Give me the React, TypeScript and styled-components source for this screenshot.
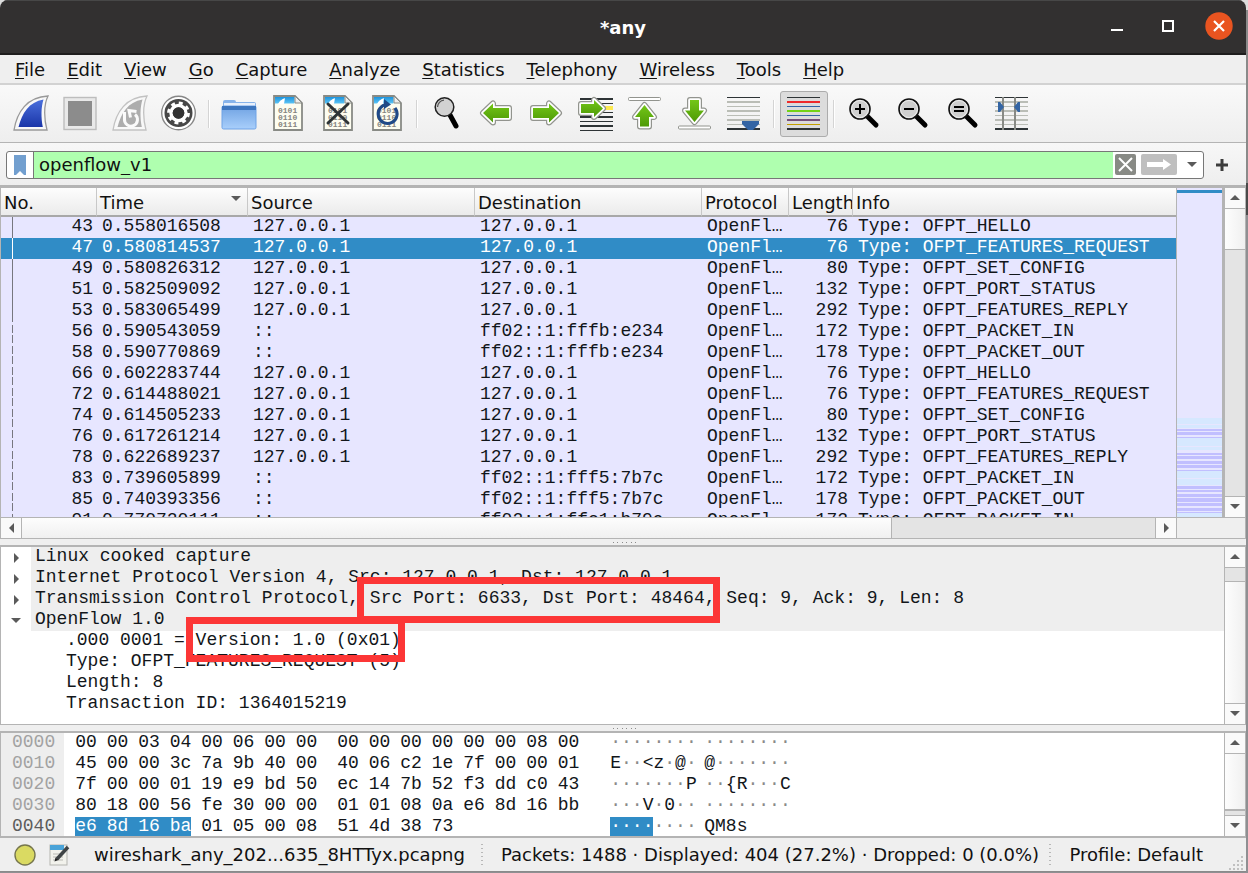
import React, { useState } from "react";
import styled, { createGlobalStyle, css } from "styled-components";

const line = "#b4b4b4";
const face = "#efefef";
const accent = "#308cc6";
const ui = '"DejaVu Sans", "Noto Sans", sans-serif';
const mono = '"Liberation Mono", "DejaVu Sans Mono", monospace';

const GlobalStyle = createGlobalStyle`
  * { box-sizing: border-box; }
  body { margin: 0; background: #8f8f92; }
  button, input { font: inherit; color: inherit; margin: 0; padding: 0; border: 0; background: none; border-radius: 0; }
  button { cursor: default; }
`;

const Desktop = styled.div`
  height: 100vh;
  padding: 0 2px 1px 0;
  display: flex;
  background: linear-gradient(#dcdcdc 0 10px, #8a8a8a 10px 183px, #4a4a4a 183px 215px, #8f8f92 215px);
`;

const Window = styled.div`
  flex: 1;
  min-width: 0;
  display: flex;
  flex-direction: column;
  overflow: hidden;
  border-radius: 8px 8px 0 0;
  border-bottom: 1px solid #8a8a8a;
  background: ${face};
  font: 18px/20px ${ui};
  color: #111;
`;

const TitleBar = styled.header`
  height: 55px;
  flex: none;
  display: grid;
  grid-template-columns: 1fr auto 1fr;
  align-items: center;
  background: #323030;
  border-top: 1px solid #474747;
  border-bottom: 2px solid #1e1d1d;
  color: #fff;
`;

const Title = styled.h1`
  grid-column: 2;
  margin: 0;
  padding-top: 2px;
  font-size: 18px;
  font-weight: bold;
`;

const WindowButtons = styled.div`
  justify-self: end;
  display: flex;
  align-items: center;
  gap: 23px;
  padding: 0 13px 2px 0;
`;

const WindowButton = styled.button`
  width: 28px;
  height: 28px;
  svg { display: block; }
`;

const MenuBar = styled.nav`
  flex: none;
  height: 30px;
  display: flex;
  align-items: center;
  gap: 22px;
  padding: 2px 0 0 15px;
  border-bottom: 2px solid #d2d2d2;
`;

const MenuItem = styled.button`
  white-space: nowrap;
  u { text-underline-offset: 2px; text-decoration-thickness: 1px; text-decoration-skip-ink: none; }
`;

const ToolBar = styled.div`
  flex: none;
  height: 58px;
  display: flex;
  align-items: center;
  padding-left: 6px;
  background: linear-gradient(#f9f9f9, #eeeeee);
  border-bottom: 1px solid ${line};
`;

const ToolGroup = styled.div<{ $width: number }>`
  width: ${(p) => p.$width}px;
  flex: none;
  display: flex;
`;

const ToolButton = styled.button<{ $on?: boolean }>`
  flex: 1;
  height: 46px;
  display: flex;
  align-items: center;
  justify-content: center;
  padding-bottom: 2px;
  svg { display: block; flex: none; }
  ${(p) =>
    p.$on &&
    css`
      margin: 0 1px;
      background: #dcdcdc;
      border: 1px solid #acacac;
      border-radius: 3px;
    `}
`;

const ToolRule = styled.div`
  width: 2px;
  height: 28px;
  margin: 0 4px;
  background: #fff;
  border-left: 1px solid #d4d4d4;
`;

const FilterBar = styled.form`
  flex: none;
  height: 45px;
  display: flex;
  align-items: center;
  gap: 9px;
  padding: 1px 15px 0 6px;
  background: linear-gradient(#f7f7f7, #eeeeee);
  border-bottom: 3px solid ${line};
`;

const FilterField = styled.div`
  flex: 1;
  height: 28px;
  display: flex;
  align-items: center;
  background: #fff;
  border: 1px solid #777;
  border-radius: 3px;
  overflow: hidden;
`;

const FilterButton = styled.button<{ $width: number }>`
  width: ${(p) => p.$width}px;
  height: 26px;
  flex: none;
  display: flex;
  align-items: center;
  justify-content: center;
`;

const FilterInput = styled.input`
  flex: 1;
  min-width: 0;
  height: 26px;
  padding-left: 5px;
  background: #afffaf;
  border-left: 1px solid #777;
  outline: none;
`;

const Pane = styled.section`
  position: relative;
  display: flex;
  min-height: 0;
  border-left: 1px solid ${line};
  border-right: 1px solid ${line};
  background: #fff;
`;

const ListPane = styled(Pane)`
  flex: 1 1 0;
`;

const DetailPane = styled(Pane)`
  flex: none;
  border-top: 2px solid ${line};
  border-bottom: 1px solid ${line};
`;

const BytePane = styled(Pane)`
  flex: none;
  height: 107px;
  border-top: 2px solid ${line};
  border-bottom: 2px solid ${line};
`;

const PaneBody = styled.div`
  flex: 1;
  min-width: 0;
  overflow: hidden;
`;

const Splitter = styled.div`
  flex: none;
  height: 6px;
  display: flex;
  align-items: center;
  justify-content: center;
`;

const PacketTable = styled.table`
  width: 100%;
  table-layout: fixed;
  border-collapse: separate;
  border-spacing: 0;
`;

const Head = styled.th`
  height: 29px;
  padding: 2px 0 0 3px;
  text-align: left;
  font-weight: normal;
  white-space: nowrap;
  overflow: hidden;
  background: linear-gradient(#fdfdfd, #ebebeb);
  border-right: 1px solid #c8c8c8;
  border-bottom: 2px solid #a8a8a8;
  &:last-child { border-right: 0; }
`;

const HeadLabel = styled.span`
  display: flex;
  justify-content: space-between;
  align-items: flex-start;
  padding-right: 5px;
`;

const PacketRow = styled.tr<{ $selected?: boolean }>`
  font: 18px/19px ${mono};
  background: ${(p) => (p.$selected ? accent : "#e7e6ff")};
  color: ${(p) => (p.$selected ? "#fff" : "#12161a")};
`;

const Cell = styled.td<{ $right?: boolean }>`
  height: 21px;
  padding: 0 5px 2px 5px;
  white-space: pre;
  overflow: hidden;
  text-align: ${(p) => (p.$right ? "right" : "left")};
`;

const NumberCell = styled(Cell)<{ $dashed: boolean; $ink: string }>`
  padding-right: 4px;
  background-image: ${(p) =>
    p.$dashed
      ? `linear-gradient(transparent 0 3px, ${p.$ink} 3px 11px, transparent 11px 13px, ${p.$ink} 13px 21px)`
      : `linear-gradient(${p.$ink}, ${p.$ink})`};
  background-size: 1px 100%;
  background-position: 11px 0;
  background-repeat: no-repeat;
`;

const MiniMap = styled.div`
  width: 49px;
  flex: none;
  display: flex;
  flex-direction: column;
  justify-content: space-between;
  padding-top: 2px;
  background: #e7e6ff;
  border-left: 1px solid ${line};
  border-right: 3px solid ${line};
  svg { display: block; width: 100%; }
`;

const MapMarker = styled.div`
  height: 3px;
  background: ${accent};
`;

const VBar = styled.div`
  width: 20px;
  flex: none;
  display: flex;
  flex-direction: column;
  background: #e4e4e4;
`;

const DividedVBar = styled(VBar)`
  width: 21px;
  border-left: 1px solid ${line};
`;

const HBar = styled.div`
  flex: none;
  height: 22px;
  display: flex;
  background: #e4e4e4;
  border: 1px solid ${line};
`;

const ArrowButton = styled.button`
  width: 20px;
  height: 20px;
  flex: none;
  display: flex;
  align-items: center;
  justify-content: center;
  background: #fafafa;
`;

const Track = styled.div<{ $size: number }>`
  flex: 0 0 ${(p) => p.$size}px;
  border-top: 1px solid ${line};
`;

const TrackFill = styled.div`
  flex: 1;
`;

const TrackEnd = styled.div`
  height: 1px;
  background: ${line};
`;

const VThumb = styled.div<{ $size?: number }>`
  flex: ${(p) => (p.$size ? `0 0 ${p.$size}px` : "1")};
  background: linear-gradient(90deg, #fdfdfd, #f0f0f0);
  border: solid ${line};
  border-width: 1px 0;
`;

const HThumb = styled.div`
  flex: 0 1 871px;
  background: linear-gradient(#fdfdfd, #f0f0f0);
  border: solid ${line};
  border-width: 0 1px;
`;

const HEnd = styled.div`
  display: flex;
  border: solid ${line};
  border-width: 0 1px;
`;

const Corner = styled.div`
  width: 68px;
  background: ${face};
`;

const Tree = styled.ul`
  margin: 0;
  padding: 0 0 9px;
  list-style: none;
  font: 18px/19px ${mono};
  color: #12161a;
`;

const TreeRow = styled.li`
  display: flex;
  height: 21px;
  white-space: pre;
`;

const Twisty = styled.button`
  width: 30px;
  height: 21px;
  flex: none;
  display: flex;
  align-items: center;
  justify-content: center;
`;

const NodeText = styled.span`
  flex: 1;
  padding-left: 4px;
  background: #eeeeee;
`;

const LeafText = styled.span`
  padding-left: 65px;
`;

const Mark = styled.div<{ $x: number; $y: number; $w: number; $h: number }>`
  position: absolute;
  left: ${(p) => p.$x}px;
  top: ${(p) => p.$y}px;
  width: ${(p) => p.$w}px;
  height: ${(p) => p.$h}px;
  border: 7px solid #fc3636;
  pointer-events: none;
`;

const HexTable = styled.table`
  border-collapse: collapse;
  font: 18px/19px ${mono};
  color: #12161a;
`;

const Offset = styled.th<{ $active: boolean }>`
  width: 63px;
  padding: 0 9px 2px 11px;
  font-weight: normal;
  text-align: left;
  background: #eeeeee;
  color: ${(p) => (p.$active ? "#5c5c5c" : "#a2a2a2")};
`;

const HexCell = styled.td<{ $gap: number }>`
  padding: 0 0 0 ${(p) => p.$gap}px;
`;

const Octets = styled.div<{ $width: number }>`
  width: ${(p) => p.$width}px;
  height: 21px;
  display: grid;
  grid-template-columns: repeat(8, 1fr);
`;

const Octet = styled.span<{ $lit: boolean; $end?: boolean; $faint?: boolean }>`
  color: ${(p) => (p.$lit ? "#fff" : p.$faint ? "#8a8a8a" : "inherit")};
  background: ${(p) => (p.$lit ? accent : "none")};
  justify-self: ${(p) => (p.$end ? "start" : "stretch")};
`;

const StatusBar = styled.footer`
  flex: none;
  height: 33px;
  display: flex;
  align-items: center;
  white-space: nowrap;
  padding: 1px 0 0 14px;
`;

const StatusButton = styled.button`
  width: 22px;
  height: 22px;
  flex: none;
  margin-right: 13px;
  svg { display: block; }
`;

const FileName = styled.span`
  width: 397px;
  flex: none;
  padding-left: 10px;
`;

const Counts = styled.span`
  flex: 1;
  min-width: 0;
  padding-left: 18px;
`;

const Profile = styled.button`
  padding: 0 24px 0 18px;
`;

const StatusRule = styled.span`
  width: 2px;
  height: 22px;
  flex: none;
  background: repeating-linear-gradient(#b8b8b8 0 1px, transparent 1px 4px);
`;

const Grip = styled.svg`
  align-self: flex-end;
  margin-right: 2px;
  flex: none;
`;

const I = ({ children }: { children: React.ReactNode }) => (
  <svg width="36" height="36" viewBox="0 0 36 36" aria-hidden="true">
    {children}
  </svg>
);

const Fin = ({ live }: { live?: boolean }) => (
  <I>
    <path d="M1 35C4 17 14 2 35 1C30.500 10 31 24 34 35Z" fill="#f8f8f8" stroke={live ? "#999" : "#c2c2c2"} strokeWidth="1.300" />
    <path d="M5.500 32C9 18 16 7 30.500 4.500C28 12 28 23 29.800 32Z" fill={live ? "url(#finBlue)" : "#adadad"} />
    {!live && <path d="M12.500 17V24A6.500 6.500 0 1 0 23 19.500M18.500 22.500L17 15.500L24.500 16.500" fill="none" stroke="#fafafa" strokeWidth="3" />}
  </I>
);

const Page = ({ children }: { children?: React.ReactNode }) => (
  <I>
    <path d="M4 1H25L32 8V35H4Z" fill="#fdfdf0" stroke="#888a85" strokeWidth="1.800" />
    <path d="M5 2H24.500V8.500H5Z" fill="url(#pageBlue)" />
    <path d="M8 9C10 5 13 4 15 3L14 9Z" fill="#fff" />
    <path d="M25 1V8H32Z" fill="#eeeeec" stroke="#888a85" />
    <g fill="#85857f" fontFamily="Liberation Mono" fontSize="8" fontWeight="bold">
      <text x="8" y="18">0101</text>
      <text x="8" y="25">0110</text>
      <text x="8" y="32">0111</text>
    </g>
    {children}
  </I>
);

const GreenArrow = ({ points }: { points: string }) => (
  <>
    <polygon points={points} fill="none" stroke="#92948e" strokeWidth="6" strokeLinejoin="round" />
    <polygon points={points} fill="none" stroke="#fff" strokeWidth="3.600" strokeLinejoin="round" />
    <polygon points={points} fill="url(#arrowGreen)" />
  </>
);

const lineYs = [2, 6, 11, 15, 20, 24, 29, 33];
const Lines = ({ colors }: { colors: string[] }) => (
  <>
    {colors.map((c, i) => (
      <rect key={i} x="1" y={lineYs[i]} width="33" height={i % 2 ? 2 : 1} fill={c} />
    ))}
  </>
);
const grey = "#babdb6";
const greyLines = ["#2e3436", grey, grey, grey, grey, grey, grey, "#2e3436"];

const Lens = ({ children }: { children: React.ReactNode }) => (
  <I>
    <path d="M22 22L30 30" stroke="#000" strokeWidth="5" strokeLinecap="round" />
    <circle cx="14" cy="14" r="10" fill="#cfcfcf" stroke="#111" strokeWidth="1.600" />
    <circle cx="14" cy="14" r="8.500" fill="none" stroke="#eee" strokeWidth="1" />
    <g stroke="#000" strokeWidth="2">{children}</g>
  </I>
);

const Arrow = ({ dir }: { dir: "up" | "down" | "left" | "right" }) => {
  const d = {
    up: "M1 8L6 3L11 8Z",
    down: "M1 3L11 3L6 8Z",
    left: "M9 1V11L4 6Z",
    right: "M4 1V11L9 6Z",
  }[dir];
  return (
    <svg width="12" height="12" viewBox="0 0 12 12" aria-hidden="true">
      <path d={d} fill="#5a5a5a" />
    </svg>
  );
};

const Defs = () => (
  <defs>
    <linearGradient id="finBlue" x1="0" y1="0" x2="0" y2="1">
      <stop offset="0" stopColor="#4a6fdc" />
      <stop offset="1" stopColor="#1a35a8" />
    </linearGradient>
    <linearGradient id="pageBlue" x1="0" y1="0" x2="0" y2="1">
      <stop offset="0" stopColor="#1c93dd" />
      <stop offset="1" stopColor="#5cc4f5" />
    </linearGradient>
    <linearGradient id="arrowGreen" x1="0" y1="0" x2="0" y2="1">
      <stop offset="0" stopColor="#73c618" />
      <stop offset="1" stopColor="#4e9a06" />
    </linearGradient>
    <linearGradient id="folderBlue" x1="0" y1="0" x2="0" y2="1">
      <stop offset="0" stopColor="#6fa2e2" />
      <stop offset="1" stopColor="#a9cffb" />
    </linearGradient>
  </defs>
);

type Tool = { label: string; icon: React.ReactNode; on?: boolean };

const toolGroups: { width: number; tools: Tool[] }[] = [
  {
    width: 198,
    tools: [
      { label: "Start capturing packets", icon: <Fin live /> },
      {
        label: "Stop capturing packets",
        icon: (
          <I>
            <rect x="2" y="2.500" width="32" height="32" fill="#e9e9e9" stroke="#bdbdbd" strokeWidth="1.400" />
            <rect x="6" y="6" width="24" height="25" fill="#8c8c8c" />
          </I>
        ),
      },
      { label: "Restart current capture", icon: <Fin /> },
      {
        label: "Capture options",
        icon: (
          <I>
            <circle cx="17.500" cy="18" r="16.800" fill="#fff" stroke="#888" strokeWidth="1.400" />
            <circle cx="17.500" cy="18" r="14" fill="#474747" />
            <circle cx="17.500" cy="18" r="10" fill="none" stroke="#fff" strokeWidth="2.800" strokeDasharray="3.927 3.927" />
            <circle cx="17.500" cy="18" r="7.500" fill="none" stroke="#fff" strokeWidth="3.400" />
            <circle cx="17.500" cy="18" r="5.800" fill="#333" />
          </I>
        ),
      },
    ],
  },
  {
    width: 198,
    tools: [
      {
        label: "Open a capture file",
        icon: (
          <I>
            <path d="M2 7Q2 5 4 5H13Q15 5 15 7H33Q35 7 35 9V14H2Z" fill="#87b3ea" />
            <rect x="3" y="8" width="31" height="3" fill="#e8f0fb" />
            <rect x="1" y="11" width="34" height="23" rx="1.500" fill="url(#folderBlue)" stroke="#6fa3e6" />
            <rect x="1" y="11" width="34" height="4" fill="#3d76bf" />
          </I>
        ),
      },
      { label: "Save this capture file", icon: <Page /> },
      {
        label: "Close this capture file",
        icon: (
          <Page>
            <path d="M8 9L28 28M28 9L8 28" stroke="#2e3436" strokeWidth="3" strokeLinecap="round" />
          </Page>
        ),
      },
      {
        label: "Reload this file",
        icon: (
          <Page>
            <path d="M26 13A9.500 9.500 0 1 1 18 9.500" fill="none" stroke="#204a87" strokeWidth="3" />
            <path d="M15 4L22 9.500L15 14Z" fill="#204a87" />
          </Page>
        ),
      },
    ],
  },
  {
    width: 347,
    tools: [
      {
        label: "Find a packet",
        icon: (
          <I>
            <path d="M21 20L27 31" stroke="#000" strokeWidth="5" strokeLinecap="round" />
            <circle cx="15.500" cy="12" r="9.300" fill="#d2d2d2" stroke="#222" strokeWidth="1.500" />
            <path d="M8.500 12A7 7 0 0 1 15 5.200" fill="none" stroke="#555" strokeWidth="1.300" />
          </I>
        ),
      },
      { label: "Previous packet", icon: <I><GreenArrow points="5,18 15,8.500 15,13 31,13 31,23 15,23 15,27.500" /></I> },
      { label: "Next packet", icon: <I><GreenArrow points="31,18 21,8.500 21,13 5,13 5,23 21,23 21,27.500" /></I> },
      {
        label: "Go to packet",
        icon: (
          <I>
            <rect x="20" y="11" width="15" height="4" fill="#fce94f" />
            {[3, 8, 17, 21, 26, 30, 35].map((y, i) => (
              <rect key={y} x="2" y={y} width="33" height={[2, 1, 1, 2, 1, 2, 1][i]} fill="#2e3436" />
            ))}
            <GreenArrow points="25,13.500 16,5 16,9 3,9 3,18 16,18 16,22" />
          </I>
        ),
      },
      {
        label: "First packet",
        icon: (
          <I>
            <rect x="1.500" y="2.500" width="32" height="3" rx="1" fill="#fff" stroke="#92948e" />
            <GreenArrow points="17.500,10 27,22 22,22 22,31.500 13,31.500 13,22 8,22" />
          </I>
        ),
      },
      {
        label: "Last packet",
        icon: (
          <I>
            <rect x="1.500" y="31" width="32" height="3" rx="1" fill="#fff" stroke="#92948e" />
            <GreenArrow points="17.500,27 27,15.500 22,15.500 22,5 13,5 13,15.500 8,15.500" />
          </I>
        ),
      },
      {
        label: "Scroll to the last packet",
        icon: (
          <I>
            <Lines colors={greyLines} />
            <path d="M16 26H33V29L27 35H22L16 29Z" fill="#3465a4" />
          </I>
        ),
      },
    ],
  },
  {
    width: 50,
    tools: [
      {
        label: "Colorize packets",
        on: true,
        icon: (
          <I>
            <Lines colors={["#2e3436", "#ef2929", "#3465a4", "#73d216", "#3465a4", "#75507b", "#c4a000", "#2e3436"]} />
          </I>
        ),
      },
    ],
  },
  {
    width: 198,
    tools: [
      { label: "Zoom in", icon: <Lens><path d="M9 14H19M14 9V19" /></Lens> },
      { label: "Zoom out", icon: <Lens><path d="M9 14H19" /></Lens> },
      { label: "Normal size", icon: <Lens><path d="M9 12H19M9 16H19" /></Lens> },
      {
        label: "Resize columns",
        icon: (
          <I>
            <Lines colors={greyLines} />
            <path d="M9 2V35M21 2V35" stroke="#888a85" strokeWidth="2" />
            <path d="M4 7H6L10 12L6 17H4ZM26 7H24L20 12L24 17H26Z" fill="#3465a4" />
          </I>
        ),
      },
    ],
  },
];

const menus = ["File", "Edit", "View", "Go", "Capture", "Analyze", "Statistics", "Telephony", "Wireless", "Tools", "Help"];

const lo = "127.0.0.1";
const packets: [string, string, string, string, string, string][] = [
  ["43", "0.558016508", lo, lo, "76", "HELLO"],
  ["47", "0.580814537", lo, lo, "76", "FEATURES_REQUEST"],
  ["49", "0.580826312", lo, lo, "80", "SET_CONFIG"],
  ["51", "0.582509092", lo, lo, "132", "PORT_STATUS"],
  ["53", "0.583065499", lo, lo, "292", "FEATURES_REPLY"],
  ["56", "0.590543059", "::", "ff02::1:fffb:e234", "172", "PACKET_IN"],
  ["58", "0.590770869", "::", "ff02::1:fffb:e234", "178", "PACKET_OUT"],
  ["66", "0.602283744", lo, lo, "76", "HELLO"],
  ["72", "0.614488021", lo, lo, "76", "FEATURES_REQUEST"],
  ["74", "0.614505233", lo, lo, "80", "SET_CONFIG"],
  ["76", "0.617261214", lo, lo, "132", "PORT_STATUS"],
  ["78", "0.622689237", lo, lo, "292", "FEATURES_REPLY"],
  ["83", "0.739605899", "::", "ff02::1:fff5:7b7c", "172", "PACKET_IN"],
  ["85", "0.740393356", "::", "ff02::1:fff5:7b7c", "178", "PACKET_OUT"],
  ["91", "0.770720111", "::", "ff02::1:ffc1:b79a", "172", "PACKET_IN"],
];

const bytes: [string, string, string, string, string][] = [
  ["0000", "00 00 03 04 00 06 00 00", "00 00 00 00 00 00 08 00", "········", "········"],
  ["0010", "45 00 00 3c 7a 9b 40 00", "40 06 c2 1e 7f 00 00 01", "E··<z·@·", "@·······"],
  ["0020", "7f 00 00 01 19 e9 bd 50", "ec 14 7b 52 f3 dd c0 43", "·······P", "··{R···C"],
  ["0030", "80 18 00 56 fe 30 00 00", "01 01 08 0a e6 8d 16 bb", "···V·0··", "········"],
  ["0040", "e6 8d 16 ba 01 05 00 08", "51 4d 38 73", "········", "QM8s"],
];

const purpleBands = [[11, 2], [14, 3], [19, 1], [35, 2], [38, 3], [43, 3], [47, 3], [52, 1], [68, 3], [72, 2], [76, 3], [80, 4], [85, 3], [90, 3], [94, 1]];
const skyBands = [[0, 6], [7, 3], [20, 8], [29, 3], [53, 7], [61, 6], [95, 4]];

const Dots = () => (
  <svg width="28" height="3" viewBox="0 0 28 3" aria-hidden="true">
    {[4, 8, 13, 17, 22, 26].map((x) => (
      <rect key={x} x={x} y="1" width="1" height="1" fill="#8c8c8c" />
    ))}
  </svg>
);

const HexRow = ({ row, lit }: { row: (typeof bytes)[number]; lit: boolean }) => (
  <tr>
    <Offset scope="row" $active={lit}>{row[0]}</Offset>
    {[row[1], row[2]].map((group, g) => (
      <HexCell key={g} $gap={g === 0 ? 11 : 10}>
        <Octets $width={252}>
          {group.split(" ").map((b, i) => (
            <Octet key={i} $lit={lit && g === 0 && i < 4} $end={i === 3}>{b}</Octet>
          ))}
        </Octets>
      </HexCell>
    ))}
    {[row[3], row[4]].map((group, g) => (
      <HexCell key={g} $gap={g === 0 ? 21 : 10}>
        <Octets $width={84}>
          {group.split("").map((c, i) => (
            <Octet key={i} $lit={lit && g === 0 && i < 4} $faint={c === "·"}>{c}</Octet>
          ))}
        </Octets>
      </HexCell>
    ))}
  </tr>
);

export default function App() {
  const [filter, setFilter] = useState("openflow_v1");
  return (
    <Desktop>
      <GlobalStyle />
      <Window>
        <TitleBar>
          <Title>*any</Title>
          <WindowButtons>
            <WindowButton aria-label="Minimize">
              <svg width="28" height="28"><rect x="8" y="17" width="12" height="2" fill="#fff" /></svg>
            </WindowButton>
            <WindowButton aria-label="Maximize">
              <svg width="28" height="28"><rect x="9" y="9" width="10" height="10" fill="none" stroke="#fff" strokeWidth="2" /></svg>
            </WindowButton>
            <WindowButton aria-label="Close">
              <svg width="28" height="28">
                <circle cx="14" cy="14" r="13.700" fill="#e95420" />
                <path d="M9 9L19 19M19 9L9 19" stroke="#fff" strokeWidth="2.200" />
              </svg>
            </WindowButton>
          </WindowButtons>
        </TitleBar>

        <MenuBar aria-label="Main menu">
          {menus.map((m) => (
            <MenuItem key={m}><u>{m[0]}</u>{m.slice(1)}</MenuItem>
          ))}
        </MenuBar>

        <ToolBar role="toolbar">
          <svg width="0" height="0"><Defs /></svg>
          {toolGroups.map((g, i) => (
            <React.Fragment key={i}>
              {i > 0 && <ToolRule />}
              <ToolGroup $width={g.width}>
                {g.tools.map((t) => (
                  <ToolButton key={t.label} aria-label={t.label} $on={t.on}>{t.icon}</ToolButton>
                ))}
              </ToolGroup>
            </React.Fragment>
          ))}
        </ToolBar>

        <FilterBar onSubmit={(e) => e.preventDefault()}>
          <FilterField>
            <FilterButton type="button" $width={26} aria-label="Filter bookmarks">
              <svg width="12" height="20"><path d="M0 0H12V20L10 20L6 16L2 20H0Z" fill="#729fcf" /></svg>
            </FilterButton>
            <FilterInput aria-label="Display filter" value={filter} onChange={(e) => setFilter(e.target.value)} />
            <FilterButton type="button" $width={24} aria-label="Clear filter" onClick={() => setFilter("")}>
              <svg width="21" height="21">
                <rect width="21" height="21" rx="2" fill="#888a85" />
                <path d="M4 4L17 17M17 4L4 17" stroke="#fff" strokeWidth="2" />
              </svg>
            </FilterButton>
            <FilterButton $width={44} aria-label="Apply filter">
              <svg width="36" height="21">
                <rect width="36" height="21" rx="2" fill="#bfbfbf" />
                <path d="M6 8H22V5L30 10.500L22 16V13H6Z" fill="#fff" />
              </svg>
            </FilterButton>
            <FilterButton type="button" $width={22} aria-label="Recent filters"><Arrow dir="down" /></FilterButton>
          </FilterField>
          <FilterButton type="button" $width={18} aria-label="Add filter button">
            <svg width="12" height="12"><path d="M0 6H12M6 0V12" stroke="#3c3c3c" strokeWidth="3" /></svg>
          </FilterButton>
        </FilterBar>

        <ListPane>
          <PaneBody>
            <PacketTable>
              <colgroup>
                <col width="96" />
                <col width="151" />
                <col width="227" />
                <col width="227" />
                <col width="87" />
                <col width="64" />
                <col />
              </colgroup>
              <thead>
                <tr>
                  <Head>No.</Head>
                  <Head><HeadLabel>Time<Arrow dir="down" /></HeadLabel></Head>
                  <Head>Source</Head>
                  <Head>Destination</Head>
                  <Head>Protocol</Head>
                  <Head>Length</Head>
                  <Head>Info</Head>
                </tr>
              </thead>
              <tbody>
                {packets.map((p, i) => (
                  <PacketRow key={p[0]} $selected={i === 1}>
                    <NumberCell $right $dashed={i > 4} $ink={i === 1 ? "#fff" : "#77777f"}>{p[0]}</NumberCell>
                    <Cell>{p[1]}</Cell>
                    <Cell>{p[2]}</Cell>
                    <Cell>{p[3]}</Cell>
                    <Cell>OpenFl…</Cell>
                    <Cell $right>{p[4]}</Cell>
                    <Cell>{`Type: OFPT_${p[5]}`}</Cell>
                  </PacketRow>
                ))}
              </tbody>
            </PacketTable>
          </PaneBody>
          <MiniMap>
            <MapMarker />
            <svg height="99" viewBox="0 0 45 99" preserveAspectRatio="none" aria-hidden="true">
              {skyBands.map(([y, h]) => <rect key={y} y={y} width="45" height={h} fill="#d6e8ff" />)}
              {purpleBands.map(([y, h]) => <rect key={y} y={y} width="45" height={h} fill="#c1bfff" />)}
            </svg>
          </MiniMap>
          <VBar>
            <ArrowButton aria-label="Scroll up"><Arrow dir="up" /></ArrowButton>
            <VThumb $size={42} />
            <TrackFill />
            <TrackEnd />
            <ArrowButton aria-label="Scroll down"><Arrow dir="down" /></ArrowButton>
          </VBar>
        </ListPane>
        <HBar>
          <ArrowButton aria-label="Scroll left"><Arrow dir="left" /></ArrowButton>
          <HThumb />
          <TrackFill />
          <HEnd>
            <ArrowButton aria-label="Scroll right"><Arrow dir="right" /></ArrowButton>
          </HEnd>
          <Corner />
        </HBar>

        <Splitter><Dots /></Splitter>

        <DetailPane>
          <PaneBody>
            <Tree>
              {[
                "Linux cooked capture",
                "Internet Protocol Version 4, Src: 127.0.0.1, Dst: 127.0.0.1",
                "Transmission Control Protocol, Src Port: 6633, Dst Port: 48464, Seq: 9, Ack: 9, Len: 8",
                "OpenFlow 1.0",
              ].map((t, i) => (
                <TreeRow key={t}>
                  <Twisty aria-label={t} aria-expanded={i === 3}><Arrow dir={i === 3 ? "down" : "right"} /></Twisty>
                  <NodeText>{t}</NodeText>
                </TreeRow>
              ))}
              {[".000 0001 = Version: 1.0 (0x01)", "Type: OFPT_FEATURES_REQUEST (5)", "Length: 8", "Transaction ID: 1364015219"].map((t) => (
                <TreeRow key={t}><LeafText>{t}</LeafText></TreeRow>
              ))}
            </Tree>
          </PaneBody>
          <DividedVBar>
            <ArrowButton aria-label="Scroll up"><Arrow dir="up" /></ArrowButton>
            <Track $size={14} />
            <VThumb />
            <ArrowButton aria-label="Scroll down"><Arrow dir="down" /></ArrowButton>
          </DividedVBar>
          <Mark $x={356} $y={30} $w={363} $h={46} />
          <Mark $x={185} $y={70} $w={219} $h={45} />
        </DetailPane>

        <Splitter><Dots /></Splitter>

        <BytePane>
          <PaneBody>
            <HexTable>
              <tbody>
                {bytes.map((r, i) => <HexRow key={r[0]} row={r} lit={i === 4} />)}
              </tbody>
            </HexTable>
          </PaneBody>
          <DividedVBar>
            <ArrowButton aria-label="Scroll up"><Arrow dir="up" /></ArrowButton>
            <VThumb />
            <Track $size={5} />
            <TrackEnd />
            <ArrowButton aria-label="Scroll down"><Arrow dir="down" /></ArrowButton>
          </DividedVBar>
        </BytePane>

        <StatusBar>
          <StatusButton aria-label="Expert information">
            <svg width="22" height="22"><circle cx="11" cy="11" r="10" fill="#dada62" stroke="#77774e" strokeWidth="1.400" /></svg>
          </StatusButton>
          <StatusButton aria-label="Capture file comments">
            <svg width="22" height="22">
              <rect x="1" y="1" width="17" height="20" fill="#f2f2ec" stroke="#b5b5b0" />
              <rect x="1" y="1" width="14" height="5" fill="#4aa3d8" />
              <path d="M4 10H14M4 13H14M4 16H14" stroke="#b9b9b4" />
              <path d="M8 15L19 3" stroke="#3f4446" strokeWidth="3.500" />
              <path d="M5.500 17.500L6.500 13.500L9.500 16Z" fill="#222" />
            </svg>
          </StatusButton>
          <FileName>wireshark_any_202...635_8HTTyx.pcapng</FileName>
          <StatusRule />
          <Counts>Packets: 1488 · Displayed: 404 (27.2%) · Dropped: 0 (0.0%)</Counts>
          <StatusRule />
          <Profile>Profile: Default</Profile>
          <Grip width="17" height="17" aria-hidden="true">
            {[[14, 2], [10, 6], [14, 6], [6, 10], [10, 10], [14, 10], [2, 14], [6, 14], [10, 14], [14, 14]].map(([x, y]) => (
              <rect key={`${x}-${y}`} x={x} y={y} width="2" height="2" fill="#c0c0c0" />
            ))}
          </Grip>
        </StatusBar>
      </Window>
    </Desktop>
  );
}
